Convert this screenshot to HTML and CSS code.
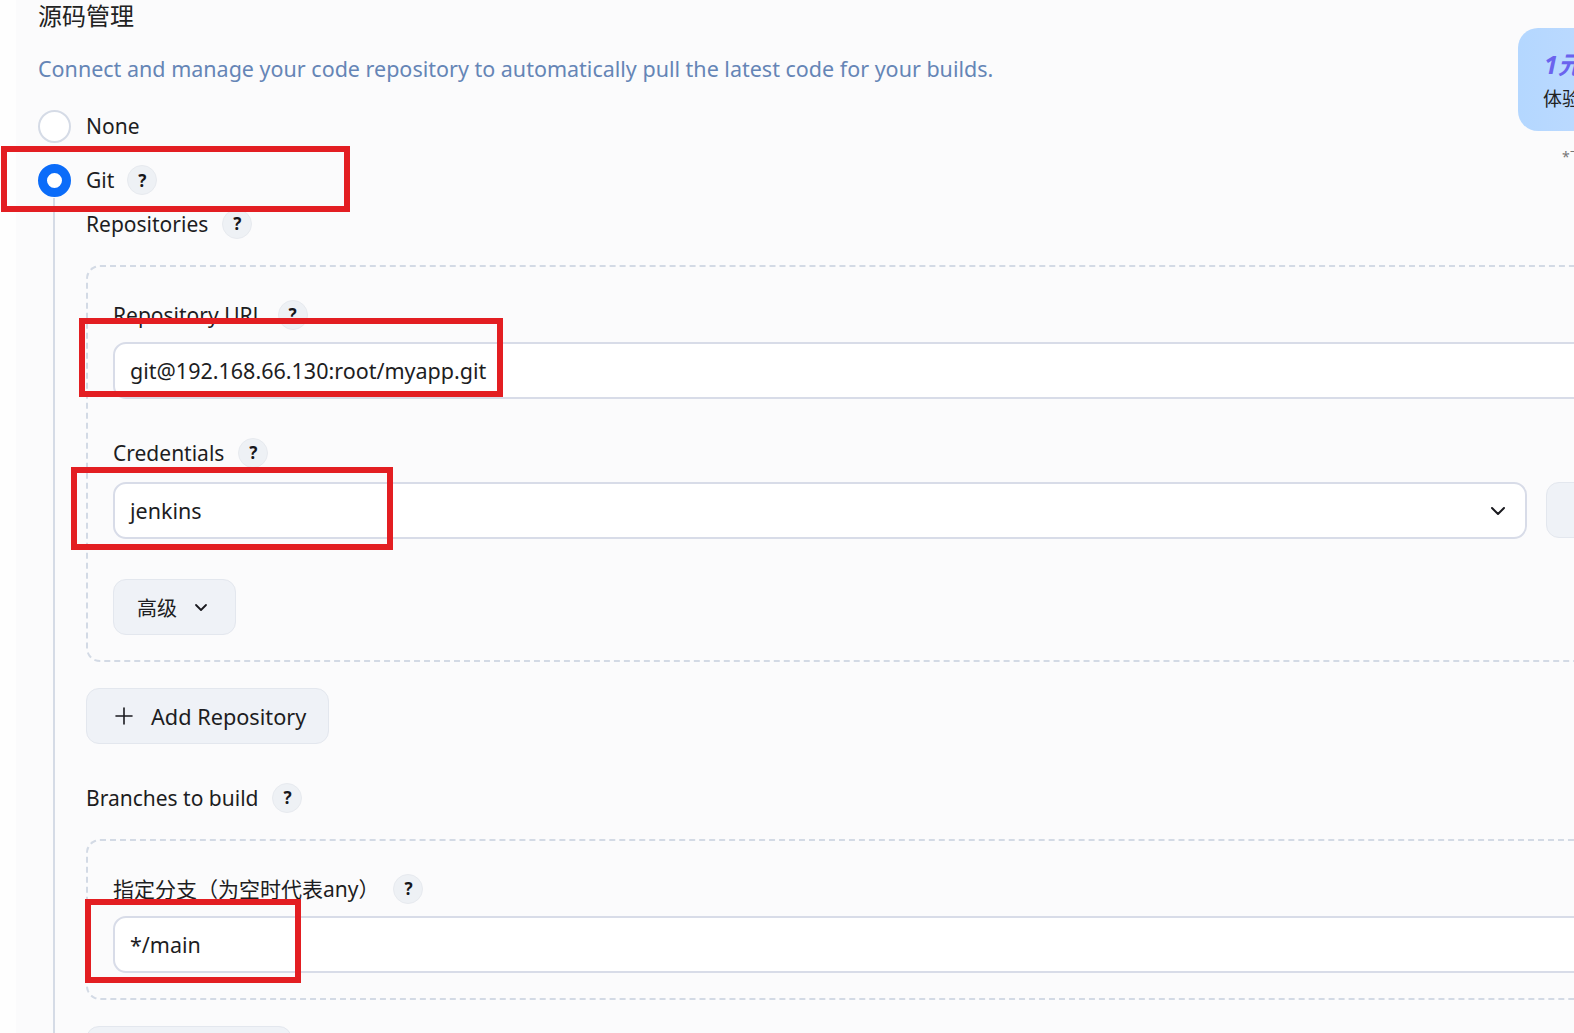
FILE: index.html
```html
<!DOCTYPE html>
<html lang="zh">
<head>
<meta charset="utf-8">
<title>源码管理</title>
<link rel="stylesheet" href="styles.css">
</head>
<body>
<div class="page">
  <div class="strip"></div>
  <section class="scm">
    <h2 class="title">源码管理</h2>
    <p class="desc">Connect and manage your code repository to automatically pull the latest code for your builds.</p>

    <div class="radio-row">
      <span class="radio"></span>
      <span class="radio-label">None</span>
    </div>
    <div class="radio-row">
      <span class="radio checked"></span>
      <span class="radio-label">Git</span>
      <span class="help">?</span>
    </div>

    <div class="nested">
      <div class="label top-label">Repositories <span class="help">?</span></div>

      <div class="repeat-box">
        <div class="field field-url">
          <div class="label">Repository URL <span class="help">?</span></div>
          <div class="input">git@192.168.66.130:root/myapp.git</div>
        </div>
        <div class="field field-cred">
          <div class="label">Credentials <span class="help">?</span></div>
          <div class="cred-row">
            <div class="input select">
              <span>jenkins</span>
              <svg class="chev" width="18" height="18" viewBox="0 0 18 18"><path d="M3 6l6 6 6-6" fill="none" stroke="#1a1a1f" stroke-width="2" stroke-linecap="round" stroke-linejoin="round"/></svg>
            </div>
            <div class="btn add-cred">+ Add</div>
          </div>
        </div>
        <div class="btn adv">
          <span>高级</span>
          <svg width="16" height="16" viewBox="0 0 16 16"><path d="M3 6l5 5 5-5" fill="none" stroke="#1a1a1f" stroke-width="1.8" stroke-linecap="round" stroke-linejoin="round"/></svg>
        </div>
      </div>

      <div class="btn add-repo">
        <svg width="20" height="20" viewBox="0 0 20 20"><path d="M10 2v16M2 10h16" fill="none" stroke="#1a1a1f" stroke-width="1.6" stroke-linecap="round"/></svg>
        <span>Add Repository</span>
      </div>

      <div class="label branches-label">Branches to build <span class="help">?</span></div>

      <div class="repeat-box box2">
        <div class="field field-url">
          <div class="label">指定分支（为空时代表any） <span class="help">?</span></div>
          <div class="input">*/main</div>
        </div>
      </div>

      <div class="btn add-branch">
        <svg width="20" height="20" viewBox="0 0 20 20"><path d="M10 2v16M2 10h16" fill="none" stroke="#1a1a1f" stroke-width="1.6" stroke-linecap="round"/></svg>
        <span>Add Branch</span>
      </div>
    </div>
  </section>

  <aside class="promo">
    <div class="promo-card">
      <div class="promo-price">1元</div>
      <div class="promo-text">体验</div>
    </div>
    <div class="promo-note">*下</div>
  </aside>

  <div class="mark mark1"></div>
  <div class="mark mark2"></div>
  <div class="mark mark3"></div>
  <div class="mark mark4"></div>
</div>
</body>
</html>
```

FILE: styles.css
```css
html, body {
  margin: 0;
  padding: 0;
  overflow: hidden;
  width: 1574px;
  height: 1033px;
}
body {
  background: #fbfbfc;
  font-family: "Noto Sans", "Noto Sans CJK SC", sans-serif;
  color: #1d1d22;
}
.page {
  position: relative;
  display: flex;
  width: 1574px;
  height: 1033px;
  overflow: hidden;
}
.strip {
  flex: 0 0 16px;
  background: #fefefe;
}
.scm {
  flex: 0 0 1700px;
  padding-left: 22px;
}
.title {
  margin: 0;
  font-size: 24px;
  line-height: 32px;
  font-weight: 400;
  color: #222;
}
.desc {
  margin: 23px 0 0;
  font-size: 21.5px;
  line-height: 28px;
  color: #6585b6;
}
.radio-row {
  display: flex;
  align-items: center;
  height: 32px;
  margin-top: 22px;
}
.desc + .radio-row {
  margin-top: 27px;
}
.radio {
  box-sizing: border-box;
  width: 33px;
  height: 33px;
  border-radius: 50%;
  border: 2px solid #d5dbe6;
  background: #fff;
  flex: none;
}
.radio.checked {
  border: 9px solid #0b6cf9;
  background: #fff;
}
.radio-label {
  margin-left: 15px;
  font-size: 21px;
  line-height: 28px;
}
.help {
  display: inline-flex;
  align-items: center;
  justify-content: center;
  box-sizing: border-box;
  width: 30px;
  height: 30px;
  border-radius: 50%;
  background: #eef1f5;
  border: 1px solid #e7eaef;
  font-size: 17px;
  font-weight: 700;
  color: #16161a;
  margin-left: 13px;
  vertical-align: middle;
  flex: none;
}
.nested {
  margin-left: 15px;
  border-left: 2px solid #d5dbe6;
  padding-left: 31px;
  padding-top: 12px;
  margin-top: 2px;
  height: 900px;
}
.label {
  display: flex;
  align-items: center;
  height: 28px;
  font-size: 21px;
  line-height: 28px;
  white-space: nowrap;
}
.label .help {
  margin-left: 14px;
}
.repeat-box {
  margin-top: 27px;
  border: 2px dashed #d3dae5;
  border-radius: 14px;
  padding: 34px 25px 25px;
}
.field {
  display: flex;
  flex-direction: column;
}
.field .label {
  margin-bottom: 15px;
}
.field-url .label {
  margin-bottom: 13px;
}
.field-cred {
  margin-top: 40px;
}
.input {
  box-sizing: border-box;
  height: 57px;
  border: 2px solid #d8dce8;
  border-radius: 13px;
  background: #fff;
  padding: 0 15px;
  display: flex;
  align-items: center;
  font-size: 21.5px;
  color: #1d1d22;
}
.cred-row {
  display: flex;
  gap: 19px;
}
.select {
  flex: 0 0 1414px;
  justify-content: space-between;
  padding-right: 18px;
}
.btn {
  box-sizing: border-box;
  display: inline-flex;
  align-items: center;
  height: 56px;
  border: 1.5px solid #e3e7ee;
  border-radius: 13px;
  background: #eff2f7;
  font-size: 21.7px;
  color: #1d1d22;
  white-space: nowrap;
}
.add-cred {
  padding: 0 30px;
}
.adv {
  margin-top: 40px;
  padding: 0 26px 0 23px;
  gap: 16px;
  font-size: 20px;
}
.add-repo, .add-branch {
  margin-top: 26px;
  padding: 0 22px 0 27px;
  gap: 17px;
}
.branches-label {
  margin-top: 40px;
}
.box2 {
  margin-top: 27px;
}
.promo {
  position: absolute;
  left: 1518px;
  top: 28px;
  width: 200px;
}
.promo-card {
  width: 130px;
  height: 103px;
  border-radius: 20px;
  background: linear-gradient(90deg, #b4d7ff, #c2dcff);
  box-sizing: border-box;
  padding: 21px 0 0 26px;
}
.promo-price {
  font-size: 25px;
  line-height: 30px;
  font-weight: 700;
  font-style: italic;
  color: #6b63ee;
}
.promo-text {
  margin-top: 7px;
  margin-left: -1px;
  font-size: 19px;
  line-height: 26px;
  color: #222;
}
.promo-note {
  margin: 15px 0 0 44px;
  font-size: 14px;
  color: #777;
}
.mark {
  position: absolute;
  box-sizing: border-box;
  border: 6px solid #e31e22;
  pointer-events: none;
}
.mark1 { left: 1px; top: 146px; width: 349px; height: 66px; }
.mark2 { left: 79px; top: 318px; width: 424px; height: 79px; }
.mark3 { left: 71px; top: 467px; width: 322px; height: 83px; }
.mark4 { left: 85px; top: 899px; width: 216px; height: 84px; }
```
